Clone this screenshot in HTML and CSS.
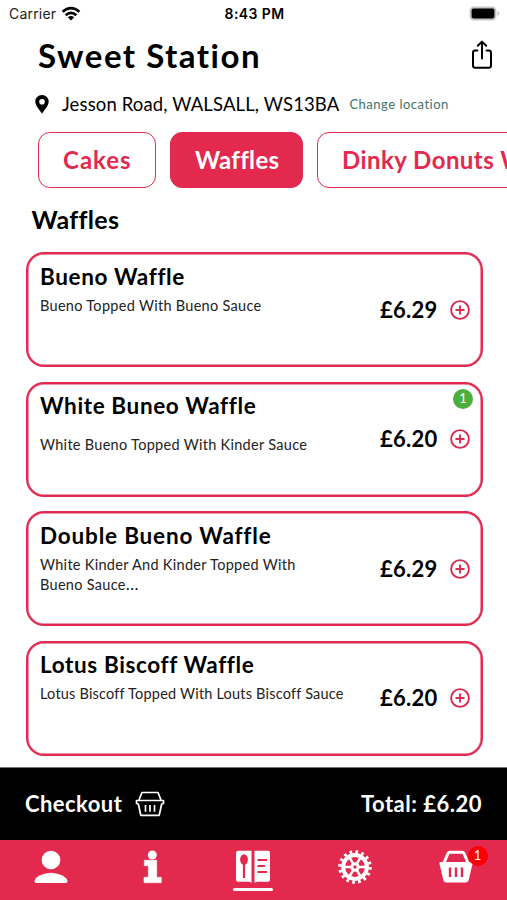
FILE: index.html
```html
<!DOCTYPE html>
<html lang="en">
<head>
<meta charset="utf-8">
<title>Sweet Station</title>
<link rel="stylesheet" href="styles.css">
</head>
<body>
<div class="app">
  <div class="status">
    <div class="carrier"><span class="carrier-name">Carrier</span>
      <svg class="wifi" width="20" height="16" viewBox="0 0 20 16" fill="none" stroke="#000" stroke-width="2.6"><path d="M1.6 5.8Q10-1.6 18.4 5.8"/><path d="M4.6 9.2Q10 4.4 15.4 9.2"/><path d="M10 14.4L6.8 11.2Q10 8.6 13.2 11.2Z" fill="#000" stroke="none"/></svg>
    </div>
    <span class="clock">8:43 PM</span>
    <svg class="battery" width="31" height="15" viewBox="0 0 31 15"><rect x=".6" y=".6" width="26.8" height="13.8" rx="4.2" fill="#c4c4c4"/><rect x="2.6" y="2.6" width="22.8" height="9.8" rx="1.8"/><path d="M28.6 5.2Q30.4 6 30.4 7.5T28.6 9.8Z" fill="#bdbdbd"/></svg>
  </div>
  <header class="header">
    <h1 class="shop">Sweet Station</h1>
    <svg class="share" width="22" height="30" viewBox="0 0 22 30" fill="none" stroke="#000" stroke-width="2" stroke-linecap="round" stroke-linejoin="round"><path d="M6.4 10.5H4.2Q2 10.5 2 12.7V25.6Q2 27.8 4.2 27.8H17.8Q20 27.8 20 25.6V12.7Q20 10.5 17.8 10.5H15.6M11 18.5V2M6.8 5.8L11 1.6L15.2 5.8"/></svg>
  </header>
  <div class="address">
    <svg class="pin" width="14" height="19" viewBox="0 0 14 19"><path fill-rule="evenodd" d="M7 0C3 0 .3 3 .3 6.6C.3 11 4.6 14.6 7 18.8C9.4 14.6 13.7 11 13.7 6.6C13.7 3 11 0 7 0ZM7 4A2.8 2.8 0 1 1 7 9.6A2.8 2.8 0 1 1 7 4Z"/></svg>
    <span class="street">Jesson Road, WALSALL, WS13BA</span>
    <a class="change">Change location</a>
  </div>
  <nav class="tabs">
    <a class="tab tab-cakes"><span>Cakes</span></a>
    <a class="tab tab-waffles"><span>Waffles</span></a>
    <a class="tab tab-dinky"><span>Dinky Donuts W</span></a>
  </nav>
  <h2 class="section">Waffles</h2>
  <main class="list">
    <article class="card">
      <div class="info"><h3 class="name">Bueno Waffle</h3><p class="desc">Bueno Topped With Bueno Sauce</p></div>
      <span class="price">£6.29</span>
      <svg class="add" width="20" height="20" viewBox="0 0 20 20"><circle cx="10" cy="10" r="8.9"/><path d="M10 5.5V14.5M5.5 10H14.5"/></svg>
    </article>
    <article class="card">
      <div class="info"><h3 class="name">White Buneo Waffle</h3><p class="desc spaced">White Bueno Topped With Kinder Sauce</p></div>
      <span class="price">£6.20</span>
      <svg class="add" width="20" height="20" viewBox="0 0 20 20"><circle cx="10" cy="10" r="8.9"/><path d="M10 5.5V14.5M5.5 10H14.5"/></svg>
      <span class="qty">1</span>
    </article>
    <article class="card">
      <div class="info"><h3 class="name name-wide">Double Bueno Waffle</h3><p class="desc">White Kinder And Kinder Topped With<br>Bueno Sauce<span class="dots">…</span></p></div>
      <span class="price">£6.29</span>
      <svg class="add" width="20" height="20" viewBox="0 0 20 20"><circle cx="10" cy="10" r="8.9"/><path d="M10 5.5V14.5M5.5 10H14.5"/></svg>
    </article>
    <article class="card">
      <div class="info"><h3 class="name">Lotus Biscoff Waffle</h3><p class="desc desc-tight">Lotus Biscoff Topped With Louts Biscoff Sauce</p></div>
      <span class="price">£6.20</span>
      <svg class="add" width="20" height="20" viewBox="0 0 20 20"><circle cx="10" cy="10" r="8.9"/><path d="M10 5.5V14.5M5.5 10H14.5"/></svg>
    </article>
  </main>
  <section class="checkout">
    <span class="checkout-label">Checkout</span>
    <svg class="basket" width="30" height="26" viewBox="0 0 30 26" fill="none" stroke="#fff" stroke-width="1.7" stroke-linejoin="round"><path d="M4 9L7 1.500H23L26 9"/><path d="M1.500 9.500H28.500V12.300L26.600 13.200L24.200 24.300H5.800L3.400 13.200L1.500 12.300Z"/><path d="M10.500 14V20.800M15 14V20.800M19.500 14V20.800"/></svg>
    <span class="total">Total: £6.20</span>
  </section>
  <nav class="bottom">
    <a class="item"><svg width="34" height="34" viewBox="0 0 34 34" fill="#fff"><circle cx="17" cy="10" r="9.300"/><path d="M.4 31Q2.500 24 17 22.800Q31.500 24 33.600 31Q33.600 33 31.500 33H2.500Q.4 33 .4 31Z"/></svg></a>
    <a class="item"><svg width="34" height="34" viewBox="0 0 34 34" fill="#fff"><circle cx="17.300" cy="5" r="4.500"/><path d="M9.300 10.300H21.700V27.300H26.300V32.700H9V27.300H13.300V15.700H9.300Z" stroke="#fff" stroke-width=".6" stroke-linejoin="round"/></svg></a>
    <a class="item current"><svg width="34" height="34" viewBox="0 0 34 34"><path fill="#fff" d="M2 .8H15.500V33Q14.500 31.800 12 31.700H2Q0 31.700 0 29.700V2.800Q0 .8 2 .8ZM18.500 .8H32Q34 .8 34 2.800V29.700Q34 31.700 32 31.700H22Q19.500 31.800 18.500 33Z"/><ellipse cx="8" cy="9.500" rx="3.900" ry="5.200" fill="#e3294d"/><path d="M8 13V28M21.500 10H31M21.500 16H29M21.500 22H31" fill="none" stroke="#e3294d" stroke-width="2.200"/></svg></a>
    <a class="item"><svg width="34" height="34" viewBox="0 0 34 34" fill="none" stroke="#fff"><circle cx="17" cy="17" r="15.200" stroke-width="3.200" stroke-dasharray="2.700 3.267"/><circle cx="17" cy="17" r="11.900" stroke-width="4"/><circle cx="17" cy="17" r="3.200" stroke-width="3"/><path stroke-width="2.500" d="M20 17H28M14 17H6M18.500 19.600L22.500 26.500M15.500 19.600L11.500 26.500M18.500 14.400L22.500 7.500M15.500 14.400L11.500 7.500"/></svg></a>
    <a class="item"><svg width="34" height="34" viewBox="0 0 34 34"><path d="M4.500 14L9 3.500Q9.600 2.200 11 2.200H23Q24.400 2.200 25 3.500L29.500 14" fill="none" stroke="#fff" stroke-width="3"/><path d="M1.500 12H32.500Q34 12.200 33.500 14L32.500 18L29.800 29.800Q29.200 32.500 26.500 32.500H7.500Q4.800 32.500 4.200 29.800L1.500 18L.5 14Q0 12.200 1.500 12Z" fill="#fff"/><path d="M11 17.500V27M17 17.500V27M23 17.500V27" stroke="#e3294d" stroke-width="2.400"/></svg><span class="count">1</span></a>
  </nav>
</div>
</body>
</html>
```
FILE: styles.css
```css
* { box-sizing: border-box; }
body { margin: 0; background: #fff; color: #000; font-family: Lato, "Liberation Sans", sans-serif; }
h1, h2, h3, p { margin: 0; }
svg { display: block; flex: none; }
span, a { white-space: nowrap; }
.app { width: 507px; height: 900px; overflow: hidden; display: flex; flex-direction: column; }
.status { height: 27px; flex: none; display: grid; grid-template-columns: 1fr auto 1fr; align-items: center; padding: 0 7px 0 9px; font-family: Inter, sans-serif; font-size: 14px; }
.carrier { display: flex; align-items: center; gap: 5px; }
.carrier-name { letter-spacing: .2px; color: #222; }
.clock { font-weight: 600; letter-spacing: .4px; }
.battery { justify-self: end; }
.header { height: 64px; flex: none; display: flex; justify-content: space-between; align-items: flex-start; padding: 8px 14px 0 38px; }
.shop { font-size: 33px; line-height: 40px; font-weight: 700; letter-spacing: 1.5px; }
.share { margin-top: 5px; }
.address { height: 41px; flex: none; display: flex; align-items: flex-start; padding-left: 35px; }
.pin { margin-top: 4px; }
.street { margin-left: 13px; font-size: 18.5px; line-height: 26px; letter-spacing: .13px; }
.change { margin-left: 10px; font-size: 13px; line-height: 26px; letter-spacing: .5px; color: #42706b; }
.tabs { height: 56px; flex: none; display: flex; gap: 14px; padding-left: 38px; }
.tab { height: 56px; flex: none; border: 1.5px solid #e3294d; border-radius: 12px; padding-left: 24px; font-size: 24px; line-height: 53px; font-weight: 700; letter-spacing: .4px; color: #e3294d; }
.tab-cakes { width: 118px; letter-spacing: 1px; }
.tab-waffles { width: 133px; background: #e3294d; color: #fff; letter-spacing: .3px; }
.tab-dinky { width: 300px; letter-spacing: .45px; }
.section { flex: none; height: 64px; padding: 14px 0 0 31.5px; font-size: 25px; line-height: 34px; font-weight: 700; letter-spacing: .3px; }
.list { flex: none; height: 515px; padding: 0 24.5px 0 25.5px; display: flex; flex-direction: column; gap: 14.5px; }
.card { position: relative; height: 115px; flex: none; display: flex; align-items: center; border: 2px solid #e02a4f; box-shadow: inset 0 0 0 .5px #e02a4f; border-radius: 18px; padding: 0 10.5px 0 12.5px; }
.info { flex: 1; align-self: flex-start; padding-top: 7.5px; }
.name { font-size: 22.5px; line-height: 30px; font-weight: 700; letter-spacing: .62px; white-space: nowrap; }
.name-wide { letter-spacing: .82px; }
.desc { margin-top: 4px; font-size: 14.5px; line-height: 20px; letter-spacing: .29px; color: #222; white-space: nowrap; }
.desc-tight { letter-spacing: .2px; }
.dots { letter-spacing: 1px; }
.spaced { margin-top: 14px; }
.dots { font-size: 17px; line-height: 1; }
.price { width: 58px; font-size: 22px; line-height: 28px; font-weight: 700; letter-spacing: .25px; margin-right: 12px; }
.add { fill: none; stroke: #dc2b50; stroke-width: 1.9; }
.qty { position: absolute; top: 5px; right: 7.5px; width: 20px; height: 20px; border-radius: 50%; background: #4cae3c; color: #fff; font-size: 13px; line-height: 19px; text-align: center; }
.checkout { height: 73px; flex: none; display: flex; align-items: center; background: #000; color: #fff; padding: 0 25px 2px; font-size: 22px; font-weight: 700; border-top: 1px solid #777; }
.checkout-label { letter-spacing: .45px; }
.basket { margin: 2px 0 0 13px; }
.total { margin-left: auto; letter-spacing: .5px; }
.bottom { height: 60px; flex: none; display: grid; grid-template-columns: repeat(5, 1fr); background: #e3294d; }
.item { position: relative; display: flex; flex-direction: column; align-items: center; padding-top: 9.5px; }
.current::after { content: ""; width: 40px; height: 3px; margin-top: 4px; border-radius: 2px; background: #fff; }
.count { position: absolute; left: 62px; top: 6px; width: 20px; height: 20px; border-radius: 50%; background: #fb0007; color: #fff; font-size: 13px; line-height: 19px; text-align: center; }
```
